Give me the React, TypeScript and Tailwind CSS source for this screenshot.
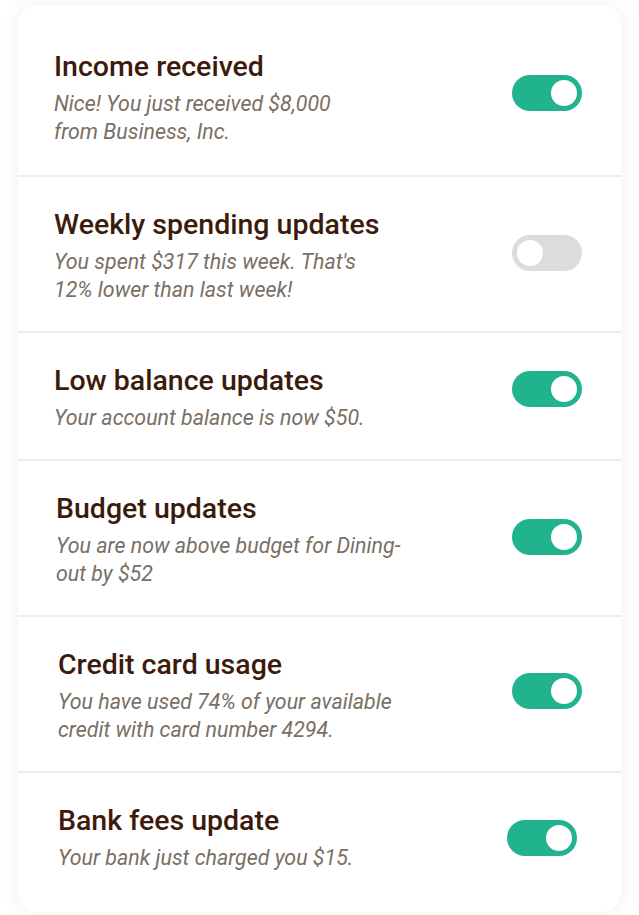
import React from "react";

type Item = {
  title: string;
  lines: string[];
  on: boolean;
  // tiny per-row offsets, the original shot is a bit skewed
  pl: string;
  pr: string;
  pad: string;
  lift: string;
};

const items: Item[] = [
  {
    title: "Income received",
    lines: ["Nice! You just received $8,000", "from Business, Inc."],
    on: true,
    pl: "pl-[36px]",
    pr: "pr-[39px]",
    pad: "pt-[31px] pb-[29px] border-b-2",
    lift: "mb-[10px]",
  },
  {
    title: "Weekly spending updates",
    lines: ["You spent $317 this week. That's", "12% lower than last week!"],
    on: false,
    pl: "pl-[36px]",
    pr: "pr-[39px]",
    pad: "pt-[31px] pb-[27px] border-b-2",
    lift: "mb-[6px]",
  },
  {
    title: "Low balance updates",
    lines: ["Your account balance is now $50."],
    on: true,
    pl: "pl-[36px]",
    pr: "pr-[39px]",
    pad: "pt-[31px] pb-[27px] border-b-2",
    lift: "mb-[18px]",
  },
  {
    title: "Budget updates",
    lines: ["You are now above budget for Dining-", "out by $52"],
    on: true,
    pl: "pl-[38px]",
    pr: "pr-[39px]",
    pad: "pt-[31px] pb-[27px] border-b-2",
    lift: "mb-[6px]",
  },
  {
    title: "Credit card usage",
    lines: ["You have used 74% of your available", "credit with card number 4294."],
    on: true,
    pl: "pl-[40px]",
    pr: "pr-[39px]",
    pad: "pt-[31px] pb-[27px] border-b-2",
    lift: "mb-[11px]",
  },
  {
    title: "Bank fees update",
    lines: ["Your bank just charged you $15."],
    on: true,
    pl: "pl-[40px]",
    pr: "pr-[44px]",
    pad: "pt-[31px] pb-[40px]",
    lift: "mb-0",
  },
];

const Toggle = ({ on, className }: { on: boolean; className: string }) => (
  <div
    className={`flex h-[36px] w-[70px] shrink-0 items-center rounded-full px-[5px] ${className} ${
      on ? "justify-end bg-[#20b38e]" : "justify-start bg-[#dddcdb]"
    }`}
  >
    <div className="h-[26px] w-[26px] rounded-full bg-white" />
  </div>
);

export default function App() {
  return (
    <div className="min-h-[915px] bg-white pt-[5px] font-['Roboto',sans-serif]">
      <div className="mx-auto w-[603px] overflow-hidden rounded-[20px] bg-white pt-[14px] shadow-[0_0_14px_4px_rgba(140,110,70,0.07)]">
        {items.map((item) => (
          <div
            key={item.title}
            className={`flex items-center justify-between border-[#f1ece7] ${item.pl} ${item.pr} ${item.pad}`}
          >
            <div>
              <div className="text-[28.5px] font-medium leading-[34px] text-[#3c1b0c]">
                {item.title}
              </div>
              <div className="mt-[6px] text-[21.4px] italic leading-[28px] text-[#7a6f64]">
                {item.lines.map((l) => (
                  <div key={l}>{l}</div>
                ))}
              </div>
            </div>
            <Toggle on={item.on} className={item.lift} />
          </div>
        ))}
      </div>
    </div>
  );
}
